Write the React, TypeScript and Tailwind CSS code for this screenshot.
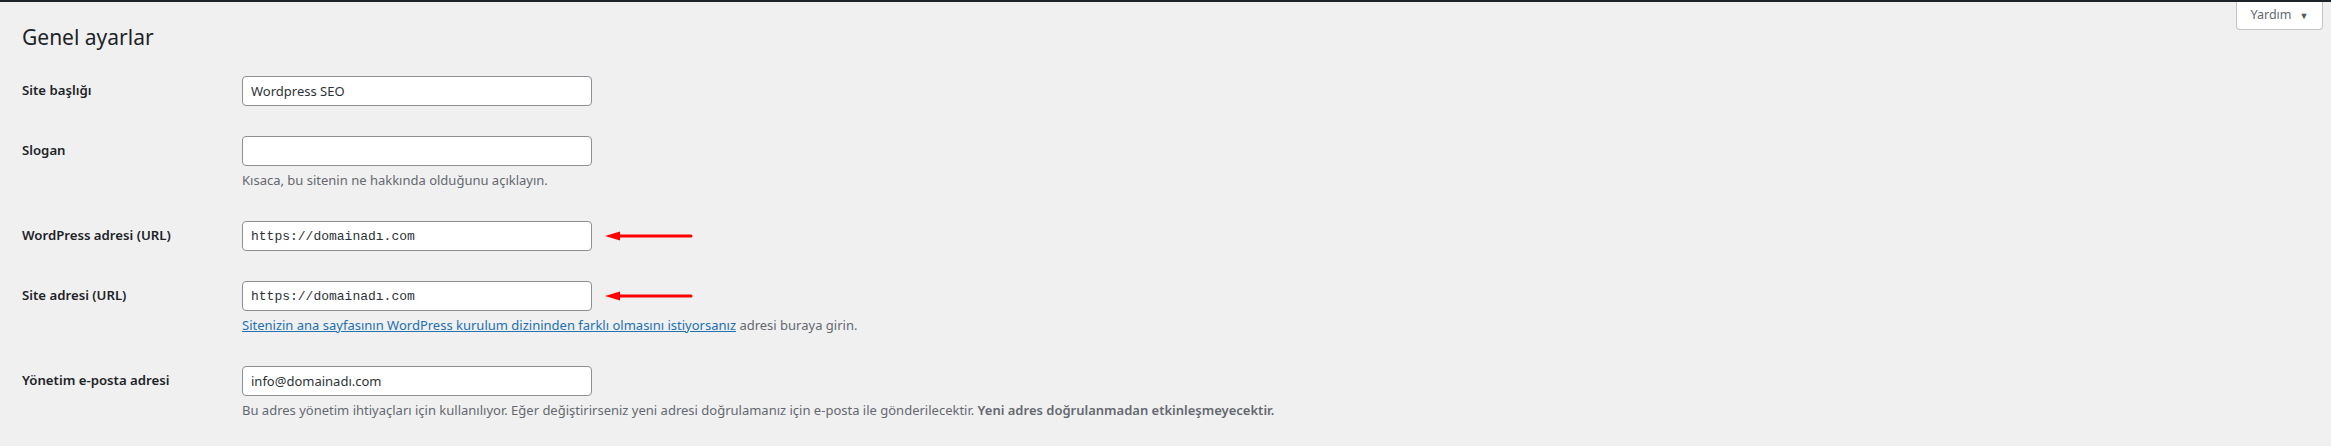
import React from "react";

const sans = "font-['Noto_Sans','Liberation_Sans',sans-serif]";
const mono = "font-['Liberation_Mono','DejaVu_Sans_Mono',monospace]";

const Arrow = () => (
  <svg width="88" height="12" viewBox="0 0 88 12" className="ml-[13px] shrink-0">
    <path d="M14 6 H86" stroke="#ff0000" strokeWidth="3" strokeLinecap="round" />
    <path d="M0 6 L15 1.5 L15 10.5 Z" fill="#ff0000" />
  </svg>
);

const Field = ({ value, monoText, arrow }: { value: string; monoText?: boolean; arrow?: boolean }) => (
  <div className="flex items-center">
    <input
      readOnly
      value={value}
      className={`w-[350px] h-[30px] rounded-[4px] border border-[#8c8f94] bg-white px-[8px] text-[#2c3338] outline-none ${
        monoText ? `${mono} text-[13px]` : "text-[13px]"
      }`}
    />
    {arrow && <Arrow />}
  </div>
);

const Desc = ({ children }: { children: React.ReactNode }) => (
  <p className="mt-[4px] text-[13px] leading-[21px] text-[#646970]">{children}</p>
);

const Row = ({ label, children }: { label: string; children: React.ReactNode }) => (
  <div className="flex">
    <div className="w-[210px] shrink-0 pt-[20px] pb-[20px] pr-[10px] text-[13.2px] font-semibold leading-[18px] text-[#1d2327]">
      {label}
    </div>
    <div className="px-[10px] py-[15px]">{children}</div>
  </div>
);

export default function App() {
  return (
    <div className={`${sans} w-full min-h-[446px] bg-[#f0f0f1] overflow-hidden`}>
      <div className="h-[2px] bg-[#1d2327]" />
      <button className="float-right mr-[8px] h-[28px] w-[87px] flex items-center justify-center gap-[8px] rounded-b-[4px] border border-t-0 border-[#c3c4c7] bg-white text-[12.5px] text-[#646970]">
        <span>Yardım</span>
        <span className="text-[9px] text-[#50575e]">▼</span>
      </button>
      <div className="ml-[22px]">
        <h1 className="pt-[20px] text-[21px] leading-[30px] font-normal text-[#1d2327]">Genel ayarlar</h1>
        <div className="mt-[9px]">
          <Row label="Site başlığı">
            <Field value="Wordpress SEO" />
          </Row>
          <Row label="Slogan">
            <Field value="" />
            <Desc>Kısaca, bu sitenin ne hakkında olduğunu açıklayın.</Desc>
          </Row>
          <Row label="WordPress adresi (URL)">
            <Field value="https://domainadı.com" monoText arrow />
          </Row>
          <Row label="Site adresi (URL)">
            <Field value="https://domainadı.com" monoText arrow />
            <Desc>
              <a href="#" className="text-[#2271b1] underline">
                Sitenizin ana sayfasının WordPress kurulum dizininden farklı olmasını istiyorsanız
              </a>{" "}
              adresi buraya girin.
            </Desc>
          </Row>
          <Row label="Yönetim e-posta adresi">
            <Field value="info@domainadı.com" />
            <Desc>
              Bu adres yönetim ihtiyaçları için kullanılıyor. Eğer değiştirirseniz yeni adresi doğrulamanız için e-posta ile
              gönderilecektir. <strong className="font-semibold">Yeni adres doğrulanmadan etkinleşmeyecektir.</strong>
            </Desc>
          </Row>
        </div>
      </div>
    </div>
  );
}
